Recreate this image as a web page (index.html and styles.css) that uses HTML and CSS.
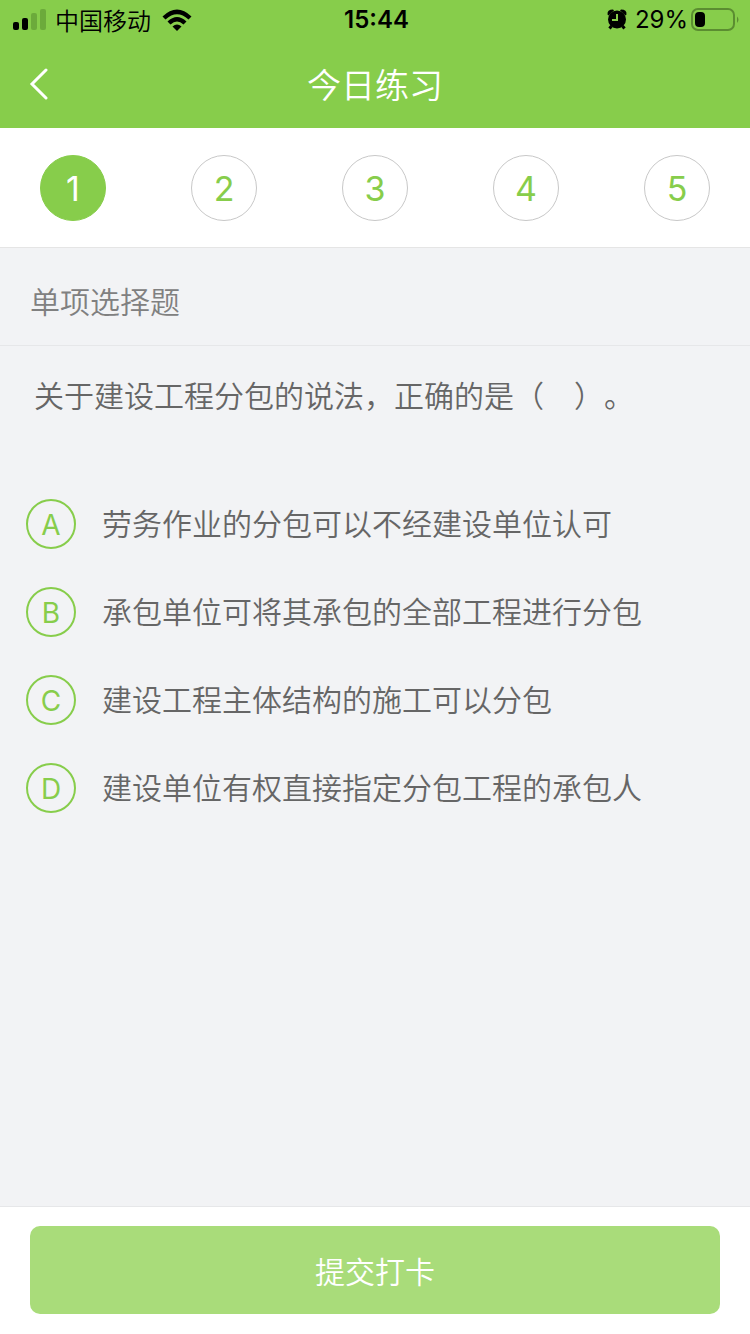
FILE: index.html
```
<!DOCTYPE html>
<html lang="zh-CN">
<head>
    <meta charset="UTF-8">
    <meta name="viewport" content="width=device-width, initial-scale=1.0">
    <title>今日练习</title>
    <link rel="stylesheet" href="styles.css">
</head>
<body>
    <header>
        <div class="status-bar">
            <div class="status-left">
                <svg width="34" height="22" viewBox="0 0 34 22">
                    <rect x="0" y="13" width="6" height="8" rx="2"/>
                    <rect x="9" y="9" width="6" height="12" rx="2"/>
                    <rect class="dim" x="18" y="4" width="6" height="17" rx="2"/>
                    <rect class="dim" x="27" y="0" width="6" height="21" rx="2"/>
                </svg>
                <span class="carrier">中国移动</span>
                <svg width="30" height="22" viewBox="0 0 30 22">
                    <path d="M0.5 7.5 Q15 -6.5 29.5 7.5 L26.5 10.5 Q15 0 3.5 10.5Z"/>
                    <path d="M5.5 12.5 Q15 3.5 24.5 12.5 L21.5 15.5 Q15 9.5 8.5 15.5Z"/>
                    <path d="M10.5 17.5 Q15 13.5 19.5 17.5 L15 22Z"/>
                </svg>
            </div>
            <time>15:44</time>
            <div class="status-right">
                <svg width="20" height="22" viewBox="0 0 20 22">
                    <circle cx="10" cy="10.5" r="9"/>
                    <path d="M0.5 5.5 Q0 0.5 6 0.5 L7 1.5 L1.5 6.5Z"/>
                    <path d="M19.5 5.5 Q20 0.5 14 0.5 L13 1.5 L18.5 6.5Z"/>
                    <path class="foot" d="M4.5 17 L2.5 19.5 M15.5 17 L17.5 19.5"/>
                    <path class="hand" d="M10 5 V11 H5"/>
                </svg>
                <span class="percent">29%</span>
                <svg width="49" height="24" viewBox="0 0 49 24">
                    <rect class="battery" x="1" y="1" width="42" height="21" rx="6"/>
                    <rect x="4" y="4" width="10" height="15" rx="4"/>
                    <path class="cap" d="M46 8.5 Q49 11.5 46 15Z"/>
                </svg>
            </div>
        </div>
        <div class="title-bar">
            <button class="back" type="button" aria-label="返回">
                <svg width="20" height="32" viewBox="0 0 20 32">
                    <path d="M17 2 L3 16 L17 30"/>
                </svg>
            </button>
            <h1>今日练习</h1>
        </div>
    </header>

    <nav class="steps">
        <button class="step active" type="button">1</button>
        <button class="step" type="button">2</button>
        <button class="step" type="button">3</button>
        <button class="step" type="button">4</button>
        <button class="step" type="button">5</button>
    </nav>

    <form>
        <main>
            <h2>单项选择题</h2>
            <p class="question" id="question">关于建设工程分包的说法，正确的是（　）。</p>
            <div class="options" role="radiogroup" aria-labelledby="question">
                <label class="option">
                    <input type="radio" name="answer" value="A">
                    <span class="letter">A</span>
                    <span>劳务作业的分包可以不经建设单位认可</span>
                </label>
                <label class="option">
                    <input type="radio" name="answer" value="B">
                    <span class="letter">B</span>
                    <span>承包单位可将其承包的全部工程进行分包</span>
                </label>
                <label class="option">
                    <input type="radio" name="answer" value="C">
                    <span class="letter">C</span>
                    <span>建设工程主体结构的施工可以分包</span>
                </label>
                <label class="option">
                    <input type="radio" name="answer" value="D">
                    <span class="letter">D</span>
                    <span>建设单位有权直接指定分包工程的承包人</span>
                </label>
            </div>
        </main>
        <footer>
            <button class="submit" type="button">提交打卡</button>
        </footer>
    </form>
</body>
</html>
```
FILE: styles.css
```
* {
    box-sizing: border-box;
}
body {
    display: flex;
    flex-direction: column;
    min-height: 100vh;
    margin: 0;
    background-color: #f2f3f5;
    color: #666;
    font-family: Inter, "Noto Sans CJK SC", sans-serif;
    font-size: 30px;
    font-weight: 350;
    text-spacing-trim: space-all;
}
button {
    padding: 0;
    border: none;
    font: inherit;
    cursor: pointer;
}
svg {
    display: block;
    flex: none;
}
header {
    background-color: #87cd4b;
}

/* status bar */
.status-bar {
    display: grid;
    grid-template-columns: 1fr auto 1fr;
    align-items: center;
    height: 40px;
    padding: 0 10px 0 13px;
    color: #000;
    font-size: 24px;
    line-height: 40px;
}
.status-left, .status-right {
    display: flex;
    align-items: center;
}
.status-right {
    justify-content: flex-end;
}
.carrier {
    height: 40px;
    margin: 0 11px 0 8px;
    padding-top: 2px;
}
.percent {
    margin: 0 3px 0 8px;
    font-weight: 400;
}
time {
    font-weight: 600;
}
.dim {
    fill: #6caa3b;
}
.cap {
    fill: #5b8d31;
}
.battery {
    fill: none;
    stroke: #5b8d31;
    stroke-width: 2;
}
.foot {
    fill: none;
    stroke: #000;
    stroke-width: 3;
}
.hand {
    fill: none;
    stroke: #87cd4b;
    stroke-width: 2;
}

/* title bar */
.title-bar {
    display: grid;
    grid-template-columns: 60px 1fr 60px;
    align-items: center;
    height: 88px;
}
.back {
    display: flex;
    align-items: center;
    height: 88px;
    padding-left: 29px;
    background: none;
}
.back path {
    fill: none;
    stroke: #fff;
    stroke-width: 3;
    stroke-linecap: round;
}
h1 {
    margin: 0;
    padding-top: 4px;
    color: #fff;
    font-size: 34px;
    font-weight: 350;
    line-height: 40px;
    text-align: center;
}

/* question numbers */
.steps {
    display: flex;
    justify-content: space-between;
    padding: 27px 40px 26px;
    background-color: #fff;
    border-bottom: 1px solid #e5e5e5;
}
.step {
    width: 66px;
    height: 66px;
    border: 1px solid #c8c8c8;
    border-radius: 50%;
    background-color: #fff;
    color: #87cd4b;
    font-size: 34px;
    font-weight: 400;
}
.step.active {
    border-color: #87cd4b;
    background-color: #87cd4b;
    color: #fff;
}

form {
    display: flex;
    flex: 1;
    flex-direction: column;
}
main {
    flex: 1;
}
h2 {
    margin: 0;
    padding: 34px 30px 23px;
    border-bottom: 1px solid #e6e7e9;
    color: #808080;
    font-size: 30px;
    font-weight: 350;
    line-height: 40px;
}
.question {
    margin: 0;
    padding: 30px 34px 64px;
    line-height: 40px;
}

/* options */
.option {
    display: flex;
    align-items: center;
    gap: 26px;
    padding: 19px 26px;
    line-height: 40px;
    cursor: pointer;
}
.option input {
    position: absolute;
    opacity: 0;
}
.letter {
    flex: none;
    width: 50px;
    height: 50px;
    border: 2px solid #87cd4b;
    border-radius: 50%;
    color: #87cd4b;
    font-size: 28px;
    font-weight: 400;
    line-height: 48px;
    text-align: center;
}
.option input:checked + .letter {
    background-color: #87cd4b;
    color: #fff;
}

footer {
    padding: 19px 30px 20px;
    background-color: #fff;
    border-top: 1px solid #e6e7e9;
}
.submit {
    width: 100%;
    height: 88px;
    border-radius: 10px;
    background-color: #a9dc7a;
    color: #fff;
}
```
